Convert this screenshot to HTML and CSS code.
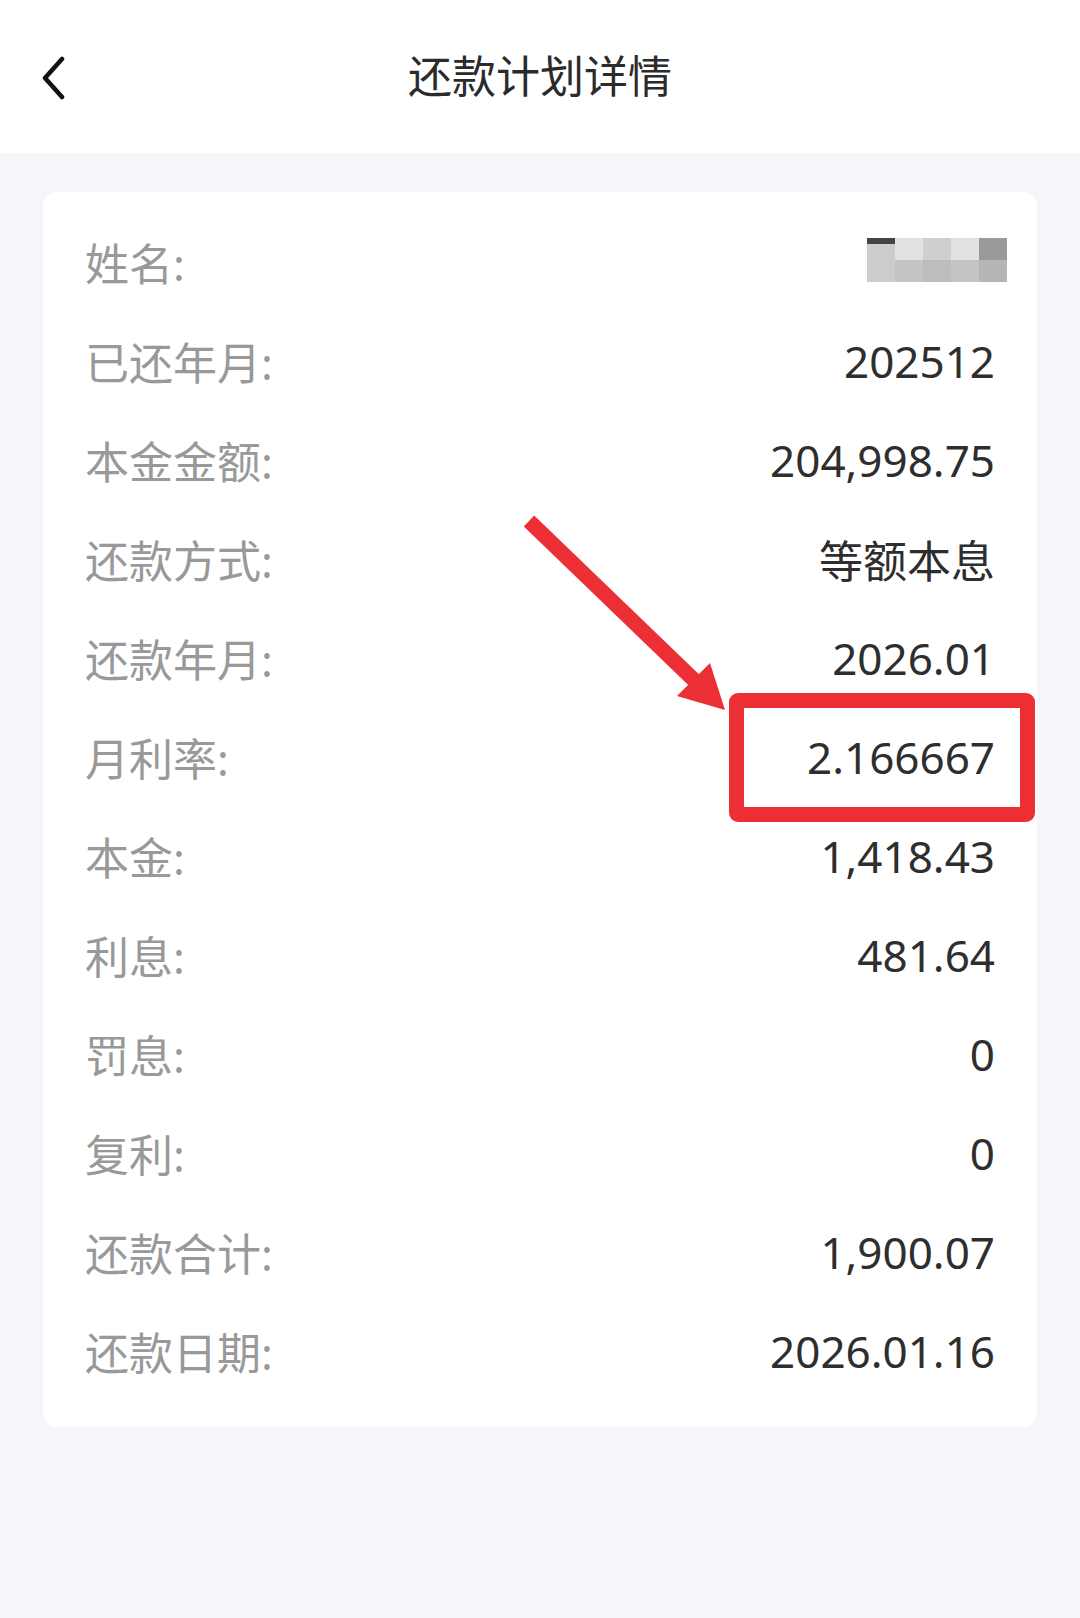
FILE: index.html
```html
<!DOCTYPE html>
<html lang="zh-CN">
<head>
    <meta charset="UTF-8">
    <title>还款计划详情</title>
    <link rel="stylesheet" href="styles.css">
</head>
<body>
    <div class="header">
        <div class="back">
            <svg width="26" height="44" viewBox="0 0 26 44">
                <path d="M22 3 L5 22 L22 41" fill="none" stroke="#111" stroke-width="4.5" stroke-linecap="round" stroke-linejoin="round"/>
            </svg>
        </div>
        <div class="title">还款计划详情</div>
        <div></div>
    </div>
    <div class="main">
        <div class="card">
            <div class="row">
                <span class="label">姓名:</span>
                <span class="masked">
                    <i class="m1"></i><i class="m2"></i><i class="m3"></i><i class="m2"></i><i class="m4"></i>
                </span>
            </div>
            <div class="row"><span class="label">已还年月:</span><span class="value">202512</span></div>
            <div class="row"><span class="label">本金金额:</span><span class="value">204,998.75</span></div>
            <div class="row"><span class="label">还款方式:</span><span class="value">等额本息</span></div>
            <div class="row"><span class="label">还款年月:</span><span class="value">2026.01</span></div>
            <div class="row"><span class="label">月利率:</span><span class="value">2.166667</span></div>
            <div class="row"><span class="label">本金:</span><span class="value">1,418.43</span></div>
            <div class="row"><span class="label">利息:</span><span class="value">481.64</span></div>
            <div class="row"><span class="label">罚息:</span><span class="value">0</span></div>
            <div class="row"><span class="label">复利:</span><span class="value">0</span></div>
            <div class="row"><span class="label">还款合计:</span><span class="value">1,900.07</span></div>
            <div class="row"><span class="label">还款日期:</span><span class="value">2026.01.16</span></div>

            <div class="mark-box"></div>
            <svg class="mark-arrow" width="240" height="230" viewBox="0 0 240 230">
                <line x1="16" y1="19" x2="182" y2="179" stroke="#ec2f35" stroke-width="15"/>
                <polygon points="212,208 164,194 197,161" fill="#ec2f35"/>
            </svg>
        </div>
    </div>
</body>
</html>
```

FILE: styles.css
```css
body {
    margin: 0;
    padding: 0;
    background-color: #f5f6fa;
    font-family: "Noto Sans", "Noto Sans CJK SC", sans-serif;
    min-height: 1618px;
}

.header {
    height: 153px;
    background-color: #fff;
    display: grid;
    grid-template-columns: 120px 1fr 120px;
    align-items: center;
}

.back {
    padding-left: 40px;
    padding-top: 2px;
    display: flex;
    align-items: center;
}

.title {
    text-align: center;
    font-size: 44px;
    color: #2b2b2b;
    padding-bottom: 6px;
}

.main {
    padding: 39px 43px;
}

.card {
    background-color: #fff;
    border-radius: 14px;
    padding: 20px 42px 27px;
    position: relative;
}

.row {
    height: 99px;
    display: flex;
    justify-content: space-between;
    align-items: center;
    font-size: 44px;
}

.label {
    color: #999;
}

.value {
    color: #2e2e2e;
}

.masked {
    display: flex;
    height: 44px;
    margin-right: -12px;
    margin-top: -4px;
}

.masked i {
    display: block;
    width: 28px;
    height: 100%;
}

.masked .m1 { background: linear-gradient(#444 0 6px, #ccc 6px); }
.masked .m2 { background: linear-gradient(#e2e2e2 50%, #c4c4c4 50%); }
.masked .m3 { background: linear-gradient(#cfcfcf 50%, #bdbdbd 50%); }
.masked .m4 { background: linear-gradient(#9a9a9a 50%, #b5b5b5 50%); }

.mark-box {
    position: absolute;
    left: 686px;
    top: 501px;
    width: 306px;
    height: 129px;
    box-sizing: border-box;
    border: 15px solid #ec2f35;
    border-radius: 9px;
}

.mark-arrow {
    position: absolute;
    left: 470px;
    top: 310px;
}
```
